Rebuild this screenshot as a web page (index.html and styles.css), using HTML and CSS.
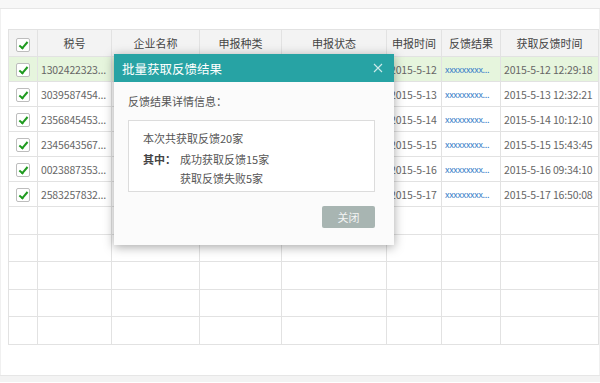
FILE: index.html
```html
<!DOCTYPE html>
<html lang="zh-CN">
<head>
    <meta charset="UTF-8">
    <title>批量获取反馈结果</title>
    <link rel="stylesheet" href="styles.css">
</head>
<body>
    <div class="topbar"></div>
    <div class="main">
        <table class="grid">
            <colgroup>
                <col style="width:29px"><col style="width:74px"><col style="width:88px"><col style="width:82px">
                <col style="width:105px"><col style="width:55px"><col style="width:59px"><col style="width:98px">
            </colgroup>
            <thead>
                <tr>
                    <th><span class="chk"></span></th>
                    <th>税号</th>
                    <th>企业名称</th>
                    <th>申报种类</th>
                    <th>申报状态</th>
                    <th>申报时间</th>
                    <th>反馈结果</th>
                    <th>获取反馈时间</th>
                </tr>
            </thead>
            <tbody>
                <tr class="selected">
                    <td class="c"><span class="chk"></span></td>
                    <td>1302422323...</td><td></td><td></td><td></td>
                    <td>2015-5-12</td><td class="link">xxxxxxxxx...</td><td>2015-5-12 12:29:18</td>
                </tr>
                <tr>
                    <td class="c"><span class="chk"></span></td>
                    <td>3039587454...</td><td></td><td></td><td></td>
                    <td>2015-5-13</td><td class="link">xxxxxxxxx...</td><td>2015-5-13 12:32:21</td>
                </tr>
                <tr>
                    <td class="c"><span class="chk"></span></td>
                    <td>2356845453...</td><td></td><td></td><td></td>
                    <td>2015-5-14</td><td class="link">xxxxxxxxx...</td><td>2015-5-14 10:12:10</td>
                </tr>
                <tr>
                    <td class="c"><span class="chk"></span></td>
                    <td>2345643567...</td><td></td><td></td><td></td>
                    <td>2015-5-15</td><td class="link">xxxxxxxxx...</td><td>2015-5-15 15:43:45</td>
                </tr>
                <tr>
                    <td class="c"><span class="chk"></span></td>
                    <td>0023887353...</td><td></td><td></td><td></td>
                    <td>2015-5-16</td><td class="link">xxxxxxxxx...</td><td>2015-5-16 09:34:10</td>
                </tr>
                <tr>
                    <td class="c"><span class="chk"></span></td>
                    <td>2583257832...</td><td></td><td></td><td></td>
                    <td>2015-5-17</td><td class="link">xxxxxxxxx...</td><td>2015-5-17 16:50:08</td>
                </tr>
                <tr class="empty"><td></td><td></td><td></td><td></td><td></td><td></td><td></td><td></td></tr>
                <tr class="empty"><td></td><td></td><td></td><td></td><td></td><td></td><td></td><td></td></tr>
                <tr class="empty"><td></td><td></td><td></td><td></td><td></td><td></td><td></td><td></td></tr>
                <tr class="empty"><td></td><td></td><td></td><td></td><td></td><td></td><td></td><td></td></tr>
                <tr class="empty"><td></td><td></td><td></td><td></td><td></td><td></td><td></td><td></td></tr>
            </tbody>
        </table>
    </div>
    <div class="bottombar"></div>

    <div class="dialog">
        <div class="dialog-head">
            <span>批量获取反馈结果</span>
            <svg class="close" width="10" height="10" viewBox="0 0 10 10">
                <path d="M1 1 L9 9 M9 1 L1 9" stroke="#cdeaea" stroke-width="1.1" fill="none"/>
            </svg>
        </div>
        <div class="dialog-body">
            <p class="label">反馈结果详情信息：</p>
            <div class="detail">
                <p>本次共获取反馈20家</p>
                <div class="sub">
                    <b>其中：</b>
                    <div class="sub-list">
                        <p>成功获取反馈15家</p>
                        <p>获取反馈失败5家</p>
                    </div>
                </div>
            </div>
            <div class="actions">
                <button class="btn-close">关闭</button>
            </div>
        </div>
    </div>
</body>
</html>
```

FILE: styles.css
```css
body {
    margin: 0;
    width: 600px;
    height: 383px;
    overflow: hidden;
    background: #ffffff;
    font-family: "Noto Sans CJK SC", sans-serif;
    font-size: 11px;
    color: #555;
    position: relative;
}
.topbar {
    height: 8px;
    background: #f7f7f7;
    border-bottom: 1px solid #e6e6e6;
}
.main {
    height: 366px;
    padding: 20px 3px 0 7px;
    box-sizing: border-box;
    border-left: 1px solid #f0f0f0;
    border-right: 1px solid #f0f0f0;
}
.bottombar {
    height: 6px;
    background: #f3f3f3;
    border-top: 1px solid #e6e6e6;
}
.grid {
    width: 590px;
    border-collapse: collapse;
    table-layout: fixed;
}
.grid th, .grid td {
    border: 1px solid #e2e2e2;
    padding: 0 3px;
    white-space: nowrap;
    overflow: hidden;
}
.grid th {
    height: 26px;
    background: #f3f3f3;
    font-weight: normal;
    color: #444;
    text-align: center;
}
.grid td {
    height: 24px;
    color: #666;
    font-size: 10.5px;
    letter-spacing: -0.15px;
}
.grid td.c {
    text-align: center;
    padding: 0;
}
.grid tr.selected td {
    background: #e6f5dd;
}
.grid tr.empty td {
    height: 26.6px;
}
.grid td.link {
    color: #3b7fc9;
    font-size: 9px;
    letter-spacing: -0.3px;
}
.chk {
    display: inline-block;
    width: 12px;
    height: 12px;
    border: 1px solid #bdbdbd;
    border-radius: 2px;
    background: #fff;
    vertical-align: middle;
    position: relative;
}
.chk::after {
    content: "";
    position: absolute;
    left: 4px;
    top: 1px;
    width: 3px;
    height: 7px;
    border: solid #1f9a1f;
    border-width: 0 2px 2px 0;
    transform: rotate(40deg);
}
.dialog {
    position: absolute;
    left: 114px;
    top: 54px;
    width: 280px;
    height: 191px;
    background: #fbfbfb;
    box-shadow: 0 2px 10px rgba(0, 0, 0, 0.35);
}
.dialog-head {
    height: 28px;
    background: #27a3a4;
    color: #fff;
    font-size: 12.5px;
    display: flex;
    align-items: center;
    justify-content: space-between;
    padding: 0 11px 0 8px;
}
.dialog-body {
    padding: 11px 19px 0 14px;
}
.dialog-body p {
    margin: 0;
}
.label {
    color: #555;
    line-height: 16px;
}
.detail {
    margin-top: 11px;
    height: 72px;
    border: 1px solid #dcdcdc;
    background: #fff;
    padding: 8px 14px 0;
    box-sizing: border-box;
    line-height: 19px;
    color: #555;
}
.sub {
    display: flex;
    gap: 4px;
    margin-top: 2px;
}
.sub b {
    font-weight: bold;
    color: #444;
    white-space: nowrap;
}
.actions {
    display: flex;
    justify-content: flex-end;
    margin-top: 14px;
}
.btn-close {
    width: 53px;
    height: 22px;
    border: none;
    border-radius: 2px;
    background: #a8b5b2;
    color: #f4f4f4;
    font-family: "Noto Sans CJK SC", sans-serif;
    font-size: 11px;
}
```
